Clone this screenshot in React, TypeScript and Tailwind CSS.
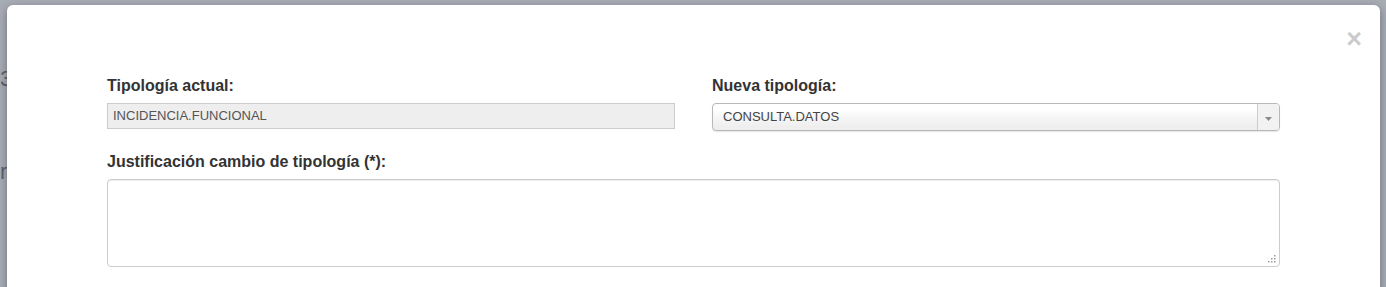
import React from 'react';

function ResizeGrip() {
  return (
    <svg width="9" height="9" viewBox="0 0 9 9" className="absolute bottom-[3px] right-[3px]">
      {[
        [7, 1],
        [4, 4],
        [7, 4],
        [1, 7],
        [4, 7],
        [7, 7],
      ].map(([x, y], i) => (
        <rect key={i} x={x} y={y} width="1.5" height="1.5" fill="#9a9a9a" />
      ))}
    </svg>
  );
}

export default function App() {
  return (
    <div
      className="relative h-[287px] w-[1386px] overflow-hidden bg-[#a7abb4] pl-[7px] pt-[5px]"
      style={{ fontFamily: '"Liberation Sans", Arial, sans-serif' }}
    >
      {/* page behind the backdrop */}
      <div className="absolute left-0 top-[62px] text-[22px] text-[#5d6270]">3</div>
      <div className="absolute left-0 top-[155px] text-[22px] text-[#5d6270]">r</div>

      {/* modal */}
      <div className="relative h-[300px] w-[1373px] rounded-[6px] bg-white px-[100px] pt-[71px] shadow-[0_3px_9px_rgba(0,0,0,0.35)]">
        <button className="absolute right-[18px] top-[21px] text-[27px] font-bold leading-none text-black opacity-20">
          ×
        </button>

        <div className="grid grid-cols-2 gap-x-[37px]">
          <div>
            <label className="mb-[7px] block text-[16px] font-bold leading-[20px] text-[#333]">
              Tipología actual:
            </label>
            <div className="flex h-[26px] items-center border border-[#ccc] bg-[#eee] px-[5px] text-[13px] text-[#555]">
              INCIDENCIA.FUNCIONAL
            </div>
          </div>
          <div>
            <label className="mb-[7px] block text-[16px] font-bold leading-[20px] text-[#333]">
              Nueva tipología:
            </label>
            <div className="flex h-[28px] items-stretch overflow-hidden rounded-[4px] border border-[#b8b8b8] bg-[linear-gradient(#fff_20%,#f6f6f6_50%,#eee_90%)] text-[13px] text-[#444] shadow-[0_1px_1px_rgba(0,0,0,0.1)]">
              <span className="flex flex-1 items-center pl-[10px]">CONSULTA.DATOS</span>
              <span className="flex w-[22px] items-center justify-center border-l border-[#ccc] bg-[#f2f2f2]">
                <svg width="7" height="4" viewBox="0 0 7 4" className="mt-[3px]">
                  <path d="M0 0h7L3.5 4z" fill="#8a8a8a" />
                </svg>
              </span>
            </div>
          </div>
        </div>

        <div className="mt-[21px]">
          <label className="mb-[7px] block text-[16px] font-bold leading-[20px] text-[#333]">
            Justificación cambio de tipología (*):
          </label>
          <div className="relative h-[88px] rounded-[4px] border border-[#ccc] bg-white shadow-[inset_0_1px_1px_rgba(0,0,0,0.075)]">
            <ResizeGrip />
          </div>
        </div>
      </div>
    </div>
  );
}
